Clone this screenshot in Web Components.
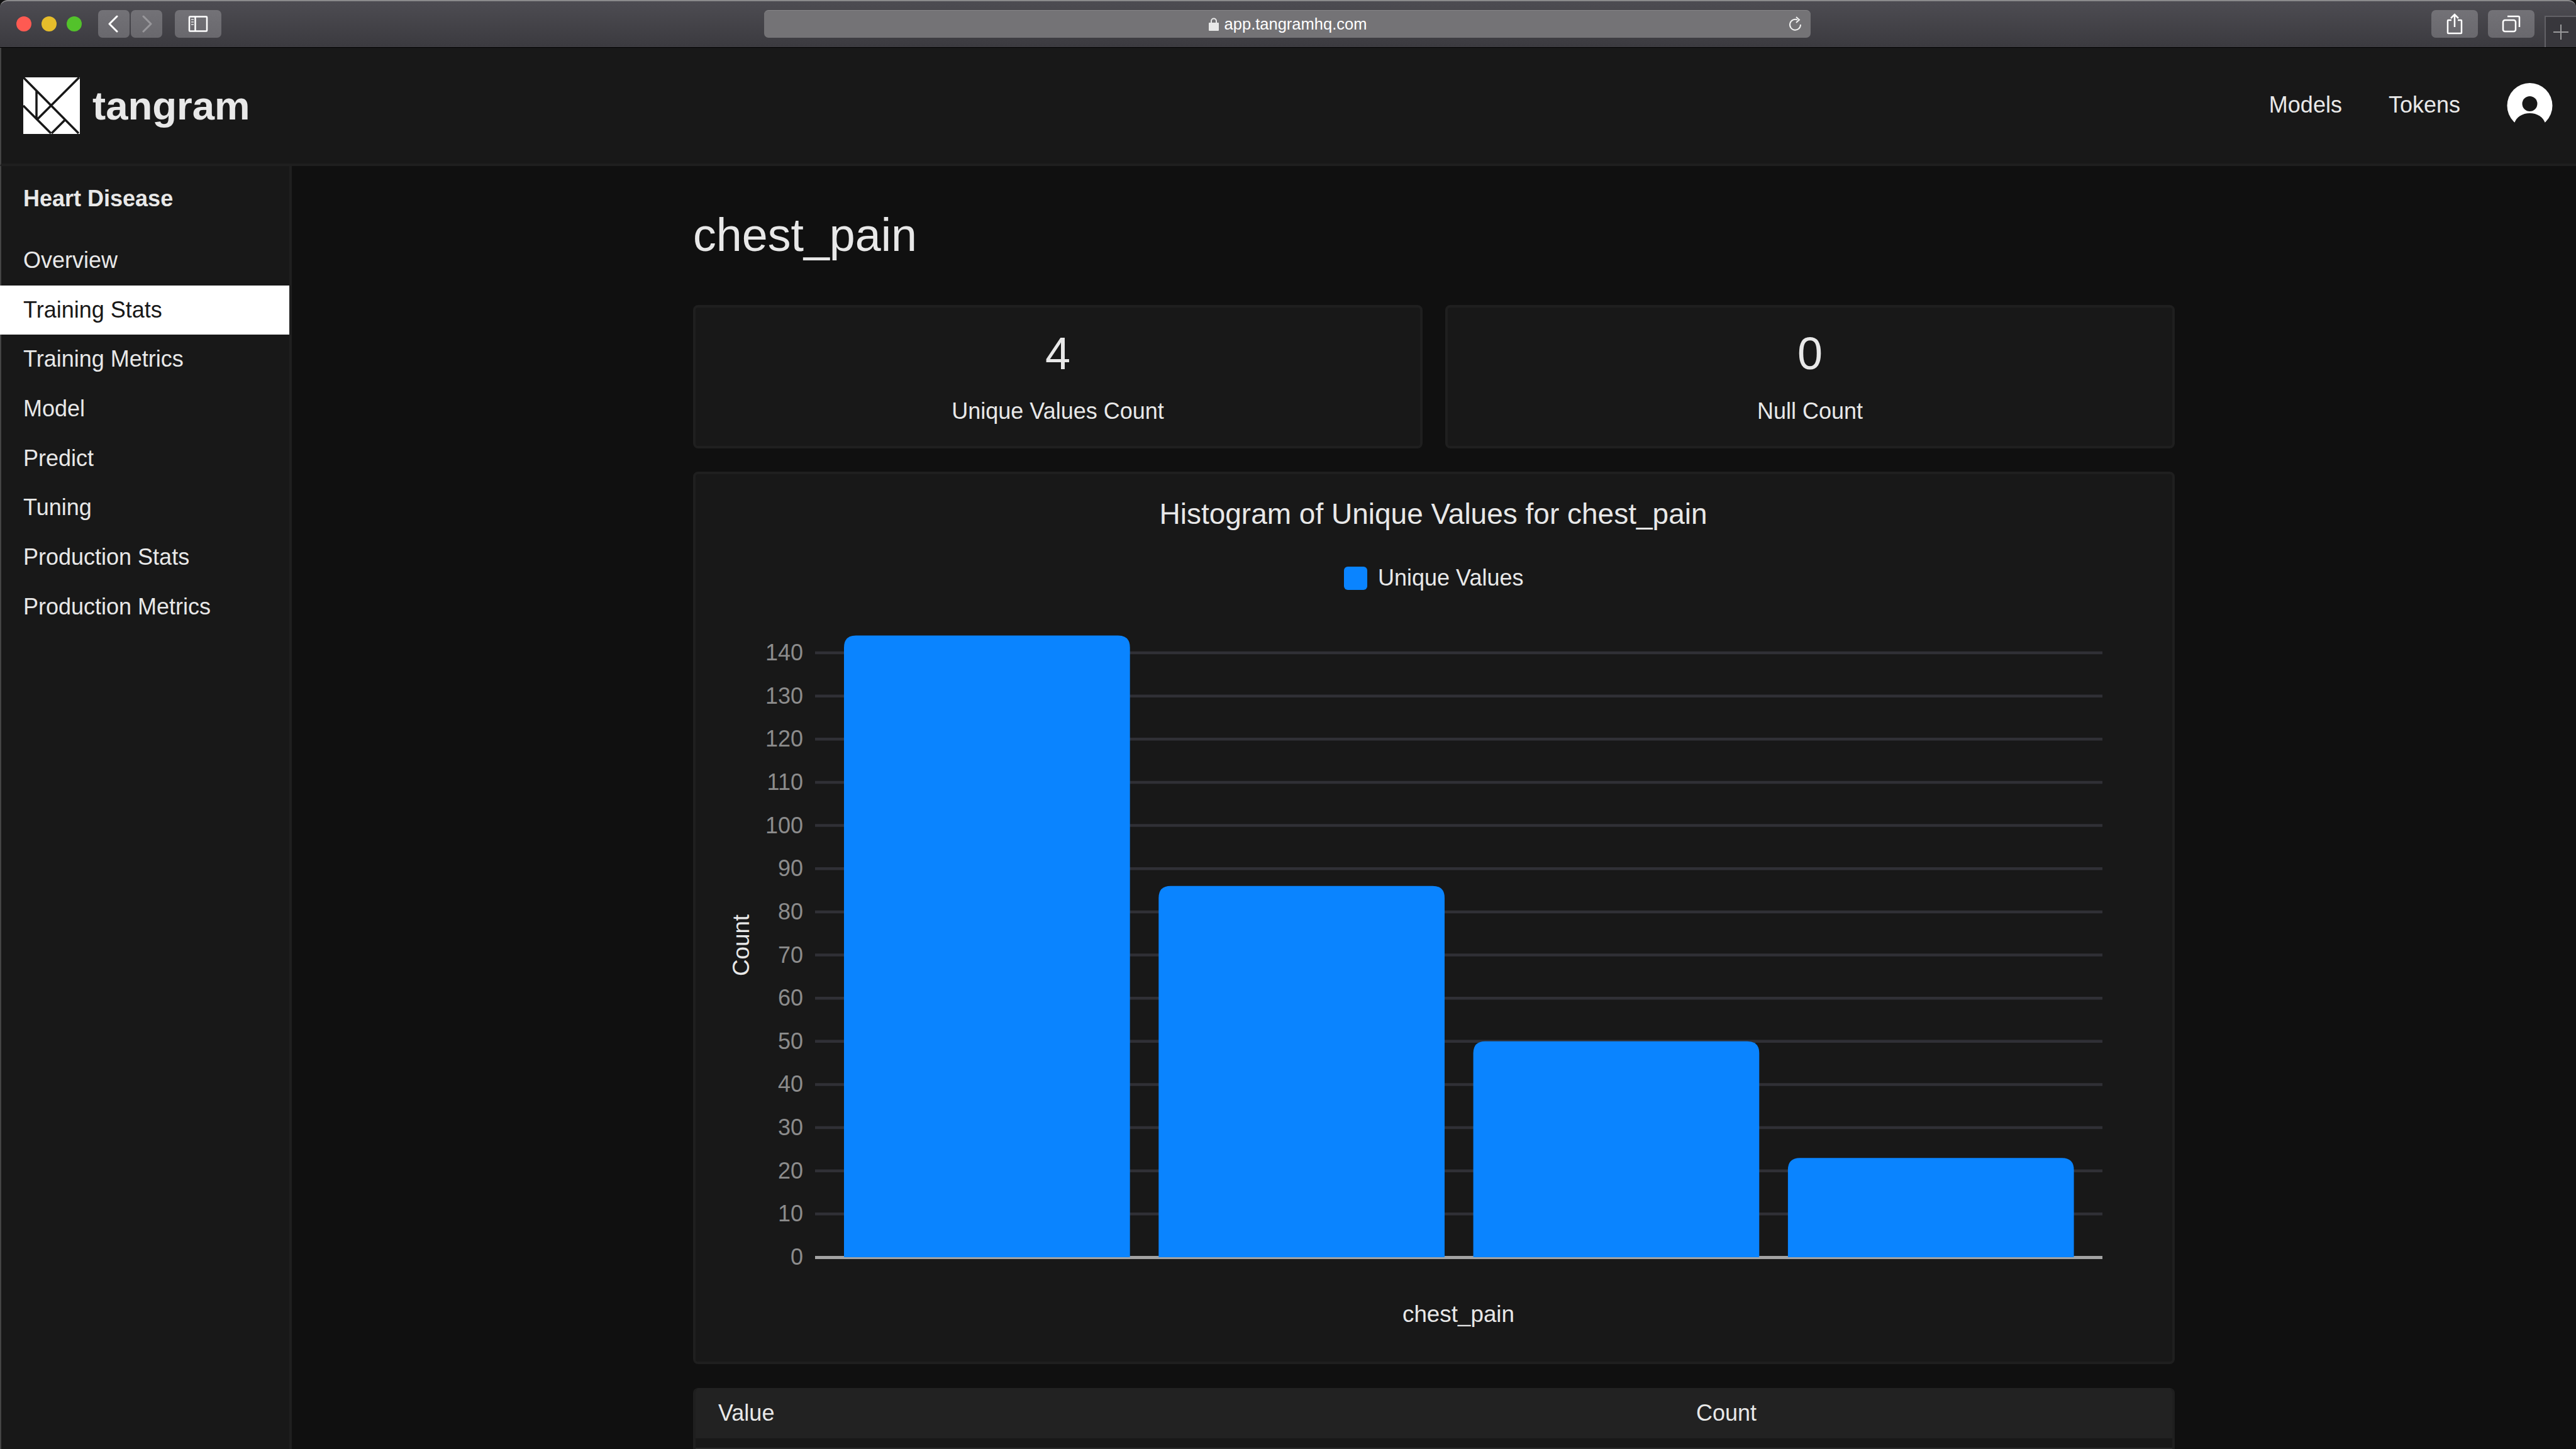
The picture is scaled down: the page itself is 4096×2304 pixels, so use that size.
<!DOCTYPE html>
<html lang="en">
<head>
<meta charset="UTF-8">
<title>chest_pain</title>
<style>
  html, body { margin: 0; height: 100%; background: #000; overflow: hidden; }
  body { font-family: "Liberation Sans", Arial, sans-serif; color: #e8e8e8; }
</style>
<script>
  function shadow(el, html) {
    el.attachShadow({ mode: "open" }).innerHTML = html;
  }

  class BrowserBar extends HTMLElement {
    constructor() {
      super();
      shadow(this, `
        <style>
          :host { display: flex; align-items: flex-start; box-sizing: border-box; height: 76px; padding: 14px 0 0 0;
            background: linear-gradient(#4d4c52, #3b3a3f); border-top: 2px solid #8a8a8c; border-bottom: 1px solid #000;
            border-radius: 12px 12px 0 0; }
          .lights { display: flex; gap: 16px; margin: 10px 26px 0 26px; }
          .lights i { display: block; width: 24px; height: 24px; border-radius: 50%; }
          .btn { display: flex; align-items: center; justify-content: center; height: 44px; border-radius: 7px; background: linear-gradient(#737277, #69686d); }
          .btn svg { display: block; }
          .nav { display: flex; gap: 2px; }
          .nav .btn { width: 50px; }
          .side { width: 74px; margin-left: 20px; }
          .url { position: relative; display: flex; align-items: center; justify-content: center; gap: 8px; width: 1664px; height: 44px; margin-left: 863px;
            border-radius: 7px; background: #747376; border-top: 1px solid #88878a; box-sizing: border-box; color: #fff; font-size: 25.5px; }
          .url .reload { position: absolute; right: 12px; top: 9px; }
          .right { display: flex; gap: 16px; margin-left: 987px; }
          .right .btn { width: 74px; }
          .plus { width: 50px; height: 50px; margin: 9px 0 0 16px; box-sizing: border-box; border-left: 2px solid #626166; border-top: 2px solid #626166;
            background: #38373c; display: flex; align-items: center; justify-content: center; }
        </style>
        <div class="lights"><i style="background:#fe5a52"></i><i style="background:#e6bd2b"></i><i style="background:#53c22b"></i></div>
        <div class="nav">
          <div class="btn"><svg width="20" height="28" viewBox="0 0 20 28" fill="none" stroke="#fff" stroke-width="3" stroke-linecap="round" stroke-linejoin="round"><path d="M15 2 3 14l12 12"/></svg></div>
          <div class="btn"><svg width="20" height="28" viewBox="0 0 20 28" fill="none" stroke="#98979b" stroke-width="3" stroke-linecap="round" stroke-linejoin="round"><path d="M5 2l12 12L5 26"/></svg></div>
        </div>
        <div class="btn side"><svg width="32" height="26" viewBox="0 0 32 26" fill="none" stroke="#fff" stroke-width="2.5"><rect x="2" y="1.5" width="28" height="23" rx="1"/><path d="M11.5 1.5v23"/><path d="M5 6h4M5 10h4M5 14h4" stroke="#c8c8ca" stroke-width="2"/></svg></div>
        <div class="url">
          <svg width="18" height="22" viewBox="0 0 18 22"><path d="M5 9V5.500a4 4 0 0 1 8 0V9" fill="none" stroke="#e8e8e8" stroke-width="2"/><rect x="1" y="8" width="16" height="13" rx="1" fill="#e8e8e8"/></svg>
          <span>app.tangramhq.com</span>
          <svg class="reload" width="24" height="26" viewBox="0 0 24 26" fill="none" stroke="#f0f0f0" stroke-width="2"><path d="M15 5.500A8.500 8.500 0 1 0 20 13"/><path d="M13 1l5 4.500L13 10" stroke-width="2"/></svg>
        </div>
        <div class="right">
          <div class="btn"><svg width="26" height="34" viewBox="0 0 26 34" fill="none" stroke="#fff" stroke-width="2.500"><path d="M8 11H3a1 1 0 0 0-1 1v19a1 1 0 0 0 1 1h20a1 1 0 0 0 1-1V12a1 1 0 0 0-1-1h-5"/><path d="M13 22V2M7 8l6-6 6 6"/></svg></div>
          <div class="btn"><svg width="30" height="28" viewBox="0 0 30 28" fill="none" stroke="#fff" stroke-width="2.500"><rect x="2" y="8" width="20" height="18" rx="3"/><path d="M9 2h17a2 2 0 0 1 2 2v15"/></svg></div>
        </div>
        <div class="plus"><svg width="24" height="24" viewBox="0 0 24 24" stroke="#9a9a9c" stroke-width="2"><path d="M12 0v24M0 12h24"/></svg></div>
      `);
    }
  }

  class AppHeader extends HTMLElement {
    constructor() {
      super();
      shadow(this, `
        <style>
          :host { display: flex; align-items: center; box-sizing: border-box; height: 188px; padding: 0 37px 0 35px; background: #181818; border-bottom: 4px solid #1f1f1f; font-size: 36px; }
          .logo { display: flex; align-items: center; gap: 20px; font-size: 63.5px; font-weight: bold; }
          .logo svg { display: block; }
          nav { display: flex; align-items: center; gap: 74px; margin-left: auto; }
          nav span { padding-bottom: 2px; }
          .avatar { display: block; }
        </style>
        <div class="logo">
          <svg width="90" height="90" viewBox="0 0 90 90"><rect width="90" height="90" fill="#fff"/><path d="M0 0 88 89M89 0 22 67M21 21v46M0 45l44 44M66 68 45 89" stroke="#181818" stroke-width="3.500" fill="none"/></svg>
          <span>tangram</span>
        </div>
        <nav>
          <span>Models</span>
          <span>Tokens</span>
          <svg class="avatar" width="73" height="72" viewBox="0 0 73 72"><circle cx="36.500" cy="36" r="36" fill="#fff"/><circle cx="36.500" cy="33" r="12" fill="#181818"/><path d="M12 64c3-10 13-16 24.500-16S58 54 61 64a36 36 0 0 1-49 0z" fill="#181818"/></svg>
        </nav>
      `);
    }
  }

  class SideNav extends HTMLElement {
    constructor() {
      super();
      shadow(this, `
        <style>
          :host { display: block; flex: none; box-sizing: border-box; width: 462px; background: #181818; border-right: 4px solid #1f1f1f; padding-top: 30px; }
          h2 { margin: 0 0 37px 0; padding-left: 35px; font-size: 36px; line-height: 44px; font-weight: bold; }
        </style>
        <h2><slot name="title"></slot></h2>
        <slot></slot>
      `);
    }
  }

  class NavItem extends HTMLElement {
    constructor() {
      super();
      shadow(this, `
        <style>
          :host { display: block; height: 78.67px; line-height: 78px; padding-left: 35px; font-size: 36px; white-space: nowrap; }
          :host([active]) { background: #fff; color: #181818; margin-left: -2px; padding-left: 37px; }
        </style>
        <slot></slot>
      `);
    }
  }

  class StatCard extends HTMLElement {
    constructor() {
      super();
      shadow(this, `
        <style>
          :host { display: block; box-sizing: border-box; background: #181818; border: 4px solid #1f1f1f; border-radius: 8px; padding: 30px 0 33px; text-align: center; }
          .num { font-size: 72px; line-height: 86px; margin-bottom: 27px; }
          .label { font-size: 36px; line-height: 44px; }
        </style>
        <div class="num"><slot name="value"></slot></div>
        <div class="label"><slot name="label"></slot></div>
      `);
    }
  }

  class BarChart extends HTMLElement {
    constructor() {
      super();
      // viewBox keeps the page coordinates of the plot, easier to read against the screenshot
      const zero = 1999, unit = 6.864;
      let grid = "", labels = "", bars = "";
      for (let v = 10; v <= 140; v += 10) {
        const y = zero - v * unit;
        grid += `<path d="M1296 ${y}H3343" stroke="#303036" stroke-width="4.500"/>`;
      }
      for (let v = 0; v <= 140; v += 10) {
        labels += `<text x="1277" y="${zero - v * unit + 12}" text-anchor="end" fill="#8c8c8c" font-size="36">${v}</text>`;
      }
      [144, 86, 50, 23].forEach((v, i) => {
        const x = 1342 + i * 500.3, w = 454.7, top = zero - v * unit, r = 19;
        bars += `<path d="M${x} ${zero}V${top + r}Q${x} ${top} ${x + r} ${top}H${x + w - r}Q${x + w} ${top} ${x + w} ${top + r}V${zero}z" fill="#0a84ff"/>`;
      });
      shadow(this, `
        <style>
          :host { display: block; box-sizing: border-box; background: #181818; border: 4px solid #1f1f1f; border-radius: 8px; }
          svg { display: block; font-family: "Liberation Sans", Arial, sans-serif; }
        </style>
        <svg width="2348" height="1411" viewBox="1106 754 2348 1411">
          <text x="2279" y="833" text-anchor="middle" fill="#e8e8e8" font-size="46">Histogram of Unique Values for chest_pain</text>
          <rect x="2137" y="901" width="37" height="37" rx="6" fill="#0a84ff"/>
          <text x="2191" y="931" fill="#e8e8e8" font-size="36">Unique Values</text>
          ${grid}
          <path d="M1296 1999.500H3343" stroke="#a3a3a3" stroke-width="5"/>
          ${labels}
          ${bars}
          <text transform="translate(1191 1503) rotate(-90)" text-anchor="middle" fill="#e8e8e8" font-size="36.800">Count</text>
          <text x="2319" y="2102" text-anchor="middle" fill="#e8e8e8" font-size="36.800">chest_pain</text>
        </svg>
      `);
    }
  }

  class ValueTable extends HTMLElement {
    constructor() {
      super();
      shadow(this, `
        <style>
          :host { display: block; box-sizing: border-box; margin-top: 1px; border-radius: 8px 8px 0 0; overflow: hidden; background: #181818; border: solid #1f1f1f; border-width: 0 4px; font-size: 36px; }
          .head { display: grid; grid-template-columns: 1555px 1fr; height: 80px; margin: 0 -4px; padding: 0 40px; background: #222; align-items: center; }
          .rule { height: 15px; border-bottom: 4px solid #2a2a2a; }
        </style>
        <div class="head"><span>Value</span><span>Count</span></div>
        <div class="rule"></div>
      `);
    }
  }

  customElements.define("browser-bar", BrowserBar);
  customElements.define("app-header", AppHeader);
  customElements.define("side-nav", SideNav);
  customElements.define("nav-item", NavItem);
  customElements.define("stat-card", StatCard);
  customElements.define("bar-chart", BarChart);
  customElements.define("value-table", ValueTable);
</script>
<style>
  .window { display: flex; flex-direction: column; height: 2304px; box-sizing: border-box; background: #101010; }
  .below { display: flex; flex: 1; min-height: 0; border-left: 2px solid #444; }
  app-header { border-left: 2px solid #444; }
  main { flex: 1; min-width: 0; overflow: hidden; }
  .content { width: 2356px; margin: 0 auto; padding-top: 67px; display: flex; flex-direction: column; gap: 37px; }
  h1 { margin: 0 0 31px 0; font-size: 73.6px; line-height: 86px; font-weight: normal; }
  .stats { display: grid; grid-template-columns: 1fr 1fr; gap: 36px; }
</style>
</head>
<body>
  <div class="window">
    <browser-bar></browser-bar>
    <app-header></app-header>
    <div class="below">
      <side-nav>
        <span slot="title">Heart Disease</span>
        <nav-item>Overview</nav-item>
        <nav-item active>Training Stats</nav-item>
        <nav-item>Training Metrics</nav-item>
        <nav-item>Model</nav-item>
        <nav-item>Predict</nav-item>
        <nav-item>Tuning</nav-item>
        <nav-item>Production Stats</nav-item>
        <nav-item>Production Metrics</nav-item>
      </side-nav>
      <main>
        <div class="content">
          <h1>chest_pain</h1>
          <div class="stats">
            <stat-card><span slot="value">4</span><span slot="label">Unique Values Count</span></stat-card>
            <stat-card><span slot="value">0</span><span slot="label">Null Count</span></stat-card>
          </div>
          <bar-chart></bar-chart>
          <value-table></value-table>
        </div>
      </main>
    </div>
  </div>
</body>
</html>
